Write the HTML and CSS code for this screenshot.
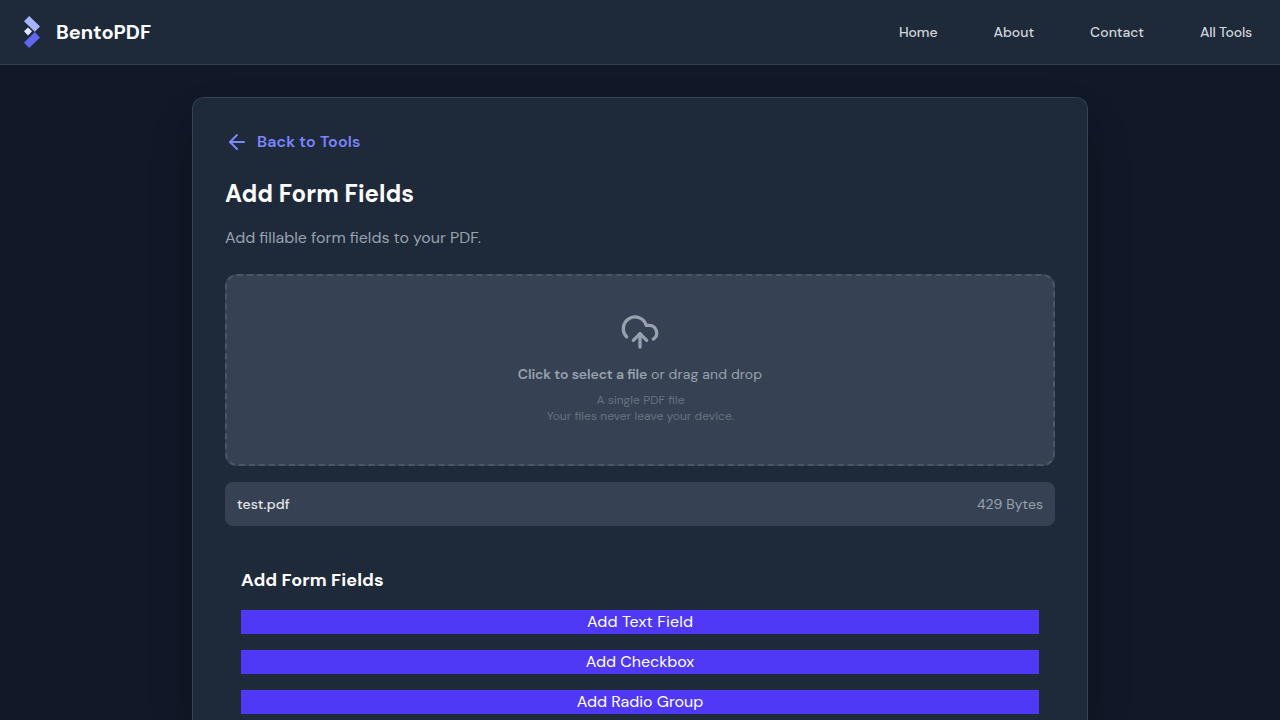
FILE: index.html
```html
<!DOCTYPE html>
<html lang="en">
<head>
<meta charset="utf-8">
<title>BentoPDF</title>
<link rel="stylesheet" href="styles.css">
</head>
<body>
<nav class="navbar">
  <div class="brand">
    <svg class="logo" viewBox="0 0 16 32" width="16" height="32"><path fill="#a5b4fc" d="M0 5.2 5.2 0 16 10.4 10.8 15.8z"/><path fill="#e0e7ff" d="M4 11.4 8 15.3 4 19.4 0 15.3z"/><path fill="#6366f1" d="M10.8 16 16 21.4 5.2 32 0 26.8z"/></svg>
    <span class="brand-name">BentoPDF</span>
  </div>
  <div class="links">
    <a class="link-home">Home</a><a>About</a><a>Contact</a><a class="link-tools">All Tools</a>
  </div>
</nav>
<main class="card">
  <a class="back"><svg width="24" height="24" viewBox="0 0 24 24" class="icon"><path d="m12 19-7-7 7-7"/><path d="M19 12H5"/></svg><span>Back to Tools</span></a>
  <h1 class="title">Add Form Fields</h1>
  <p class="subtitle">Add fillable form fields to your PDF.</p>
  <div class="dropzone">
    <svg width="40" height="40" viewBox="0 0 24 24" class="icon cloud"><path d="M12 13v8"/><path d="M4 14.899A7 7 0 1 1 15.71 8h1.79a4.5 4.5 0 0 1 2.5 8.242"/><path d="m8 17 4-4 4 4"/></svg>
    <p class="prompt"><b>Click to select a file</b> or drag and drop</p>
    <p class="hint">A single PDF file</p>
    <p class="hint">Your files never leave your device.</p>
  </div>
  <div class="file"><span class="file-name">test.pdf</span><span class="file-size">429 Bytes</span></div>
  <section class="fields">
    <h2 class="fields-title">Add Form Fields</h2>
    <button class="add add-text">Add Text Field</button>
    <button class="add">Add Checkbox</button>
    <button class="add">Add Radio Group</button>
  </section>
</main>
</body>
</html>
```
FILE: styles.css
```css
* { box-sizing: border-box; margin: 0; }
body { height: 720px; overflow: hidden; background: #111827; font: 16px/24px "DM Sans", Inter, sans-serif; font-feature-settings: "liga" 1; color: #fff; }
.navbar { height: 65px; background: #1e2939; border-bottom: 1px solid #364153; display: flex; align-items: center; justify-content: space-between; padding: 0 28px 0 24px; }
.brand { display: flex; align-items: center; gap: 16px; }
.logo { display: block; }
.brand-name { font-size: 20px; font-weight: 700; line-height: 28px; letter-spacing: -0.04px; }
.links { display: flex; gap: 56px; font-size: 14px; font-weight: 500; color: #d1d5dc; }
.link-home { letter-spacing: -0.1px; }
.link-tools { letter-spacing: -0.19px; }
.card { width: 896px; height: 623px; margin: 32px auto 0; padding: 32px 32px 0; background: #1e2939; border: 1px solid #364153; border-bottom: 0; border-radius: 12px 12px 0 0; box-shadow: 0 20px 25px -5px rgba(0,0,0,.1), 0 25px 50px -12px rgba(0,0,0,.25); }
.back { display: flex; gap: 8px; height: 24px; color: #7c86ff; font-weight: 600; letter-spacing: 0.16px; }
.icon { display: block; fill: none; stroke: currentColor; stroke-width: 2; stroke-linecap: round; stroke-linejoin: round; }
.title { font-size: 24px; line-height: 32px; font-weight: 700; letter-spacing: 0.06px; margin: 24px 0 16px; }
.subtitle { color: #99a1af; word-spacing: -0.2px; margin-bottom: 24px; }
.dropzone { height: 192px; background: #364153; border: 2px dashed #4a5565; border-radius: 12px; display: flex; flex-direction: column; align-items: center; padding-top: 36px; color: #99a1af; }
.cloud { margin-bottom: 12px; }
.prompt { font-size: 14px; line-height: 20px; letter-spacing: 0.12px; margin-bottom: 8px; }
.prompt b { font-weight: 600; letter-spacing: -0.09px; }
.hint { font-size: 12px; line-height: 16px; letter-spacing: 0.05px; padding-left: 1px; color: #6a7282; }
.file { height: 44px; margin-top: 16px; background: #364153; border-radius: 8px; padding: 0 12px; display: flex; align-items: center; justify-content: space-between; font-size: 14px; }
.file-name { font-weight: 500; letter-spacing: 0.12px; color: #e5e7eb; }
.file-size { letter-spacing: 0.06px; color: #99a1af; }
.fields { margin-top: 24px; padding: 16px 16px 0; display: flex; flex-direction: column; }
.fields-title { font-size: 18px; line-height: 28px; font-weight: 700; letter-spacing: 0.1px; margin-bottom: 16px; }
.add { border: 0; padding: 0; height: 24px; background: #4f39f6; color: #fff; font: inherit; }
.add + .add { margin-top: 16px; }
.add-text { letter-spacing: 0.13px; }
```
